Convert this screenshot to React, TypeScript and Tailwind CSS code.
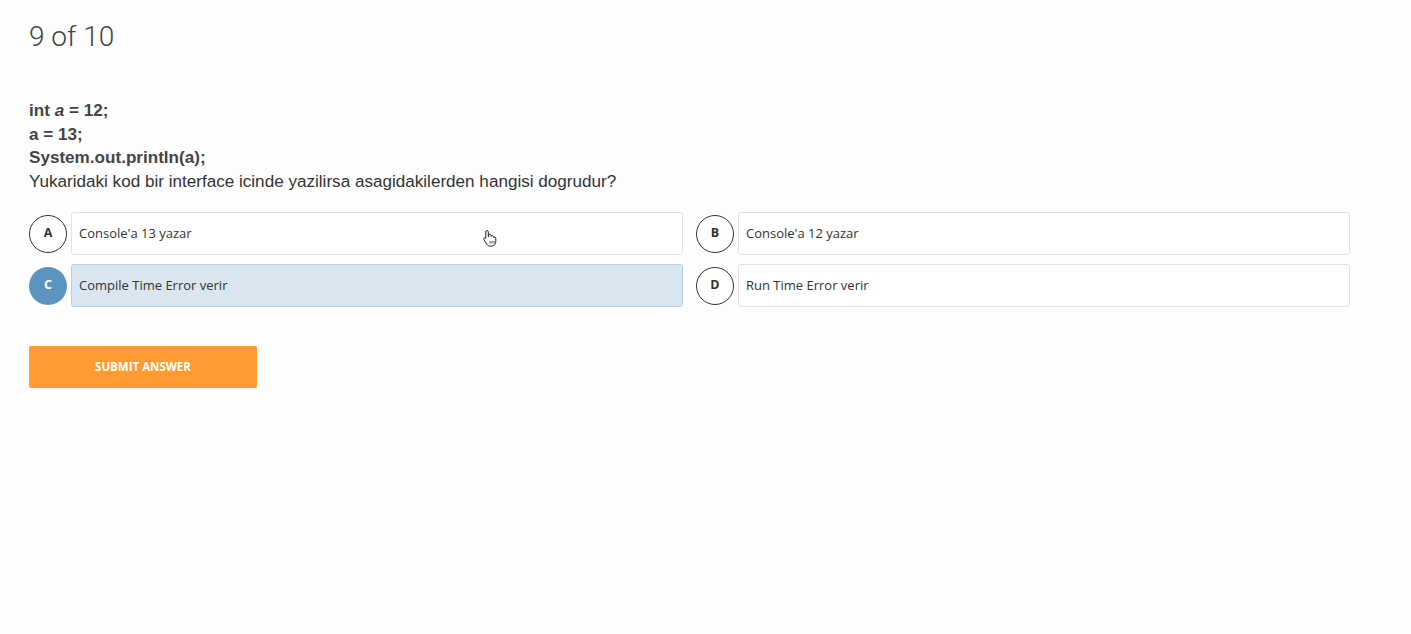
const options = [
  { key: 'A', label: "Console'a 13 yazar" },
  { key: 'B', label: "Console'a 12 yazar" },
  { key: 'C', label: 'Compile Time Error verir' },
  { key: 'D', label: 'Run Time Error verir' },
];

const selected = 'C';

function HandCursor() {
  return (
    <svg width="16" height="18" viewBox="0 0 16 18" className="absolute left-[482px] top-[229px]">
      <path
        d="M5 1.5c.8 0 1.3.6 1.3 1.3v5l.4-.1V6.3c0-.7.6-1.2 1.2-1.2s1.2.5 1.2 1.2v1.2c.2-.6.7-.9 1.2-.9.7 0 1.2.5 1.2 1.2v.8c.2-.4.6-.6 1.1-.6.7 0 1.2.5 1.2 1.2v3.5c0 2.5-1.8 4.4-4.3 4.4H8.1c-1.4 0-2.4-.6-3.2-1.7L1.9 10.6c-.4-.6-.3-1.3.2-1.7.5-.4 1.2-.3 1.6.2l.1.1V2.8c0-.7.5-1.3 1.2-1.3z"
        fill="#fff"
        stroke="#222"
        strokeWidth="1"
      />
      <path d="M8 12v2.5M10 12v2.5M12 12v2.5" stroke="#222" strokeWidth="0.8" />
    </svg>
  );
}

export default function App() {
  return (
    <div className="relative min-h-[634px] bg-[#fdfdfe] px-[29px] pt-[18px] font-['Liberation_Sans',Arial,sans-serif] text-[#3a3a3a]">
      <h1 className="font-['Roboto',sans-serif] text-[28px] font-light leading-[37px] text-[#444]">9 of 10</h1>

      <div className="mt-[44px] text-[17.1px] leading-[23.5px]">
        <p className="font-bold text-[#444]">
          int <em>a</em> = 12;
        </p>
        <p className="font-bold text-[#444]">a = 13;</p>
        <p className="font-bold text-[#444]">System.out.println(a);</p>
        <p className="text-[#333]">Yukaridaki kod bir interface icinde yazilirsa asagidakilerden hangisi dogrudur?</p>
      </div>

      <div className="mt-[19px] grid w-[1321px] grid-cols-2 gap-x-[13px] gap-y-[9px]">
        {options.map((opt) => {
          const isSel = opt.key === selected;
          return (
            <div key={opt.key} className="flex items-center gap-[4px]">
              <div
                className={`flex h-[38px] w-[38px] shrink-0 items-center justify-center rounded-full font-['Open_Sans',sans-serif] text-[12.5px] font-bold ${
                  isSel ? 'bg-[#5b95bf] text-white' : 'border border-[#333] bg-white text-[#333]'
                }`}
              >
                {opt.key}
              </div>
              <div
                className={`flex h-[43px] flex-1 items-center rounded-[3px] border px-[7px] font-['Open_Sans',sans-serif] text-[13px] text-[#333] ${
                  isSel ? 'border-[#b9d0e3] bg-[#d9e6f0]' : 'border-[#e1e1e6] bg-white'
                }`}
              >
                {opt.label}
              </div>
            </div>
          );
        })}
      </div>

      <button className="mt-[39px] h-[42px] w-[228px] rounded-[2px] bg-[#ff9b2f] font-['Open_Sans',sans-serif] text-[11.5px] font-bold uppercase text-white">
        Submit Answer
      </button>

      <HandCursor />
    </div>
  );
}
